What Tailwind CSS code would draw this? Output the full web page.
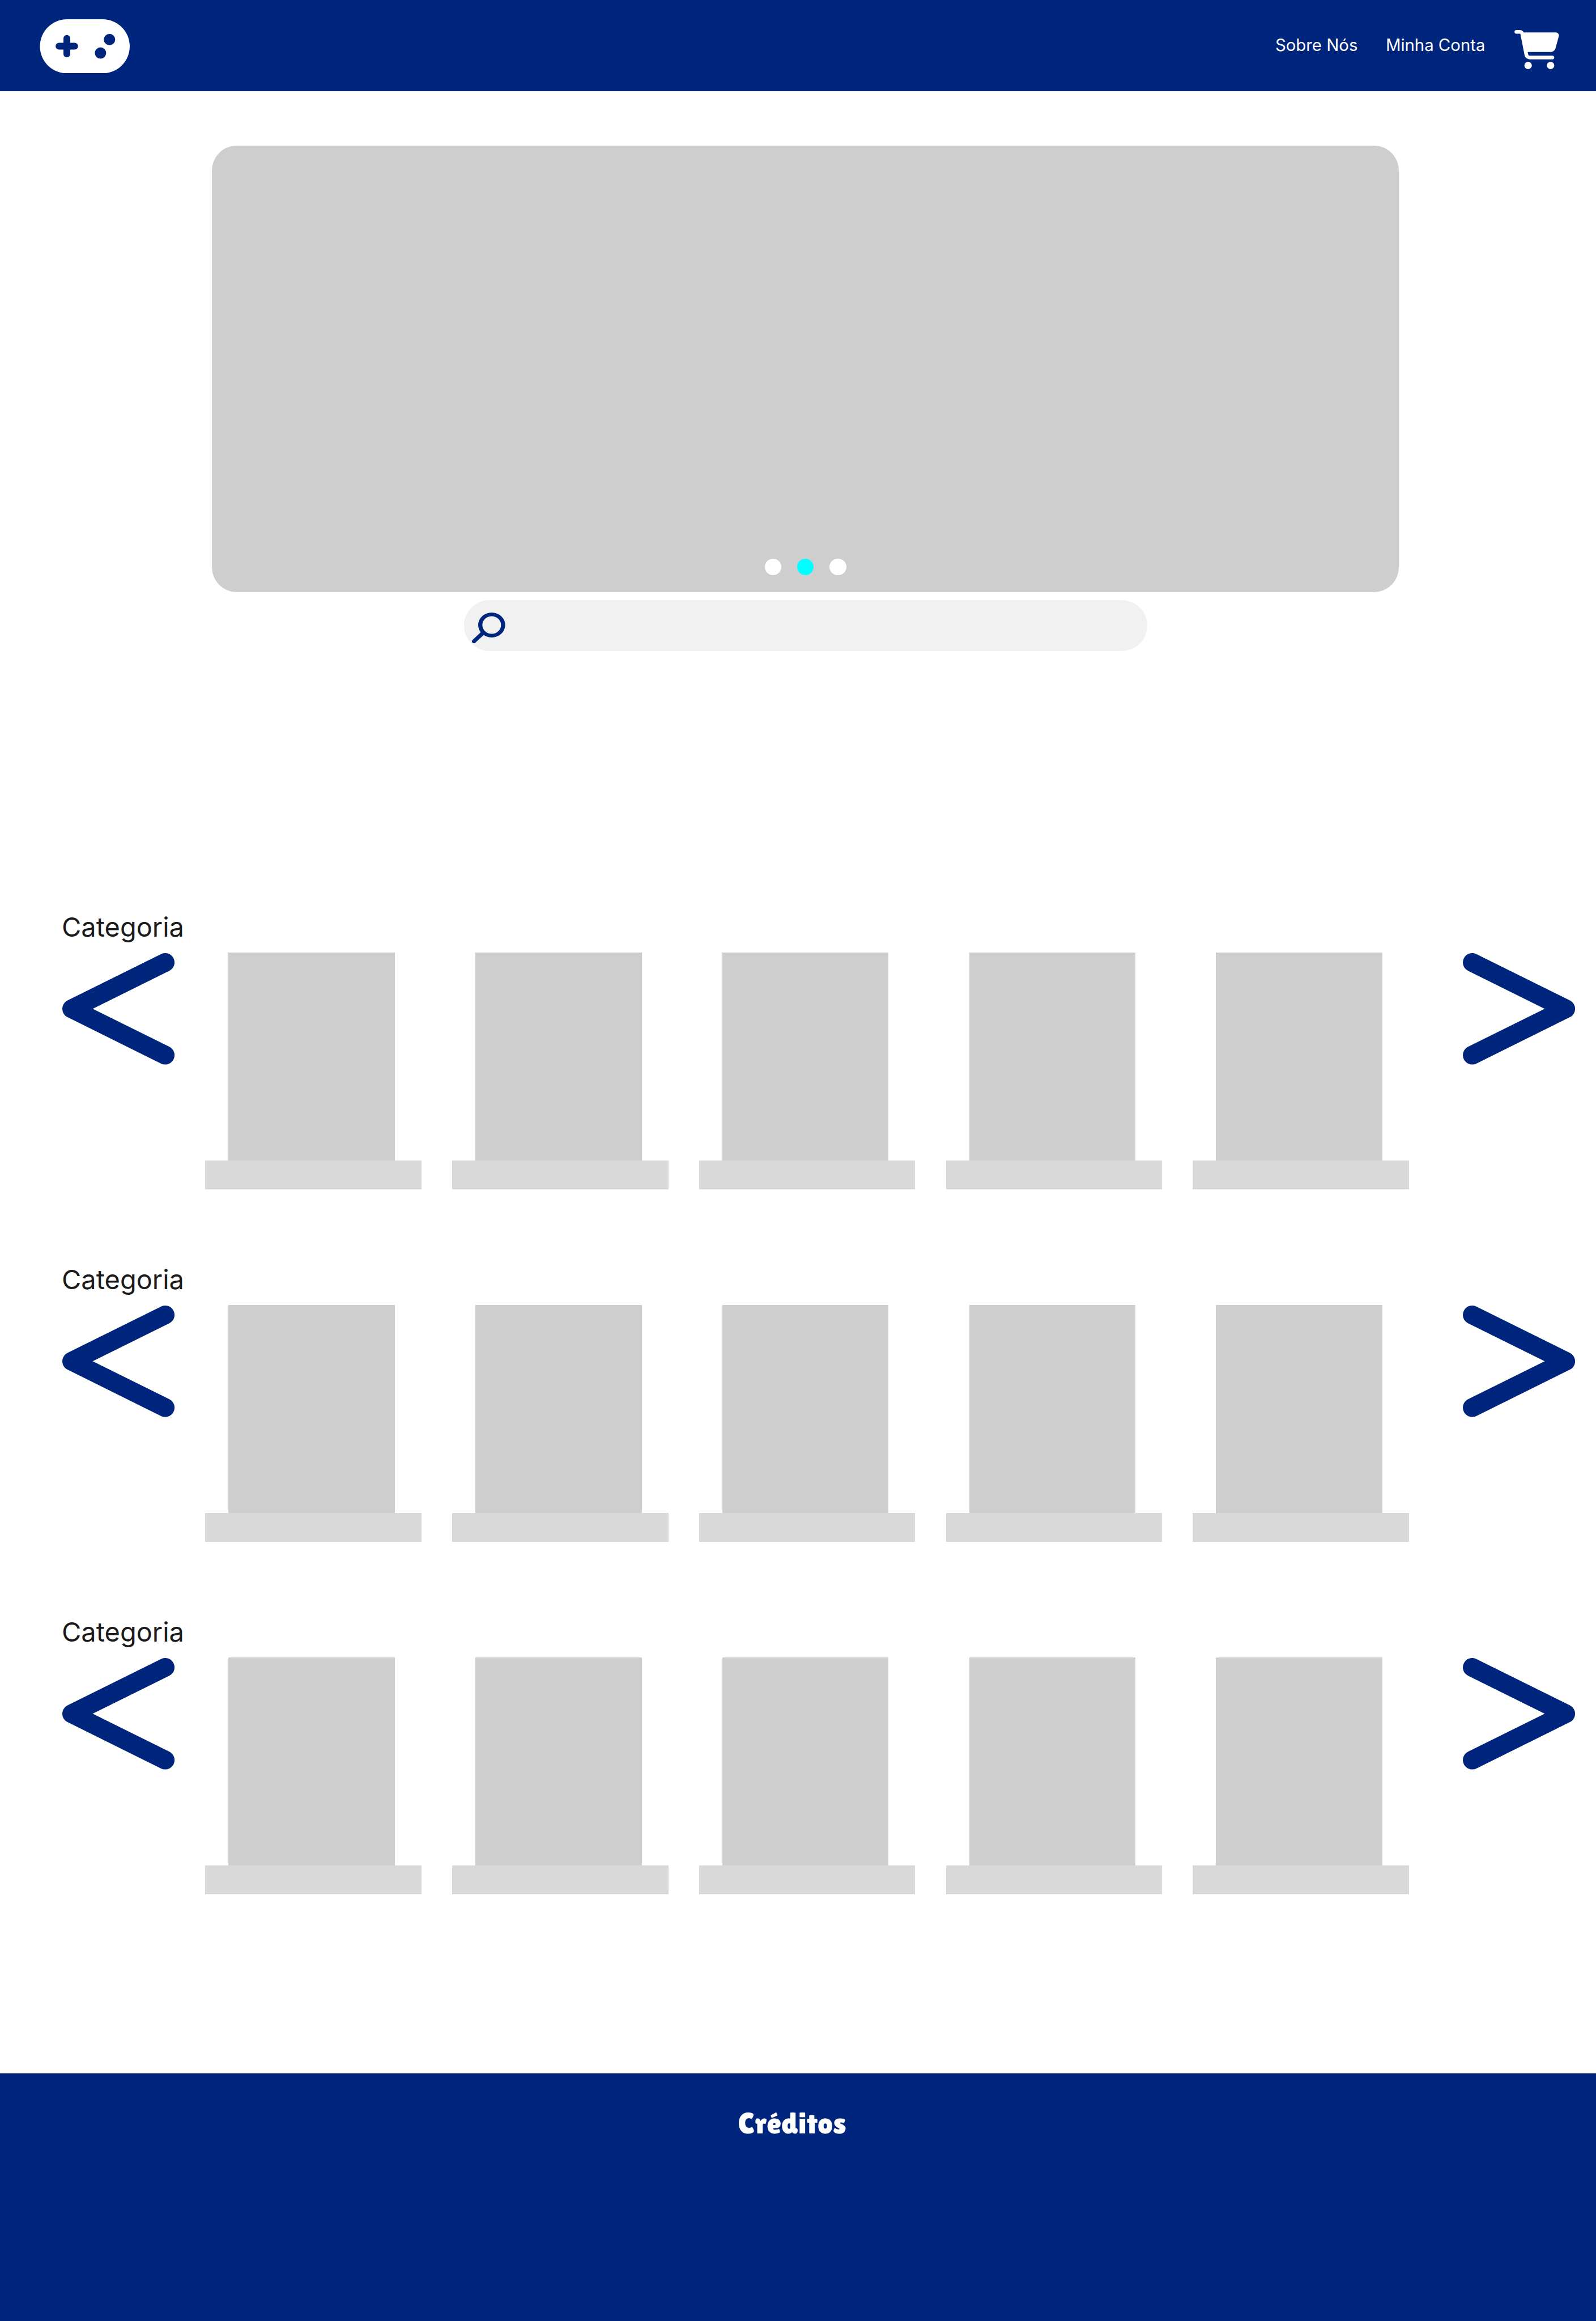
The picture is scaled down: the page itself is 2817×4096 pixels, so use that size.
<!DOCTYPE html>
<html lang="pt-BR">
<head>
<meta charset="utf-8">
<title>Loja de Jogos</title>
<script src="https://cdn.jsdelivr.net/npm/@tailwindcss/browser@4"></script>
</head>
<body class="bg-white">
<div class="flex h-[4096px] w-[2817px] flex-col overflow-hidden font-['Inter',sans-serif]">
  <header class="flex h-[161.4px] shrink-0 items-start justify-between bg-[#00257d] pr-[64.6px] pl-[70.4px]">
    <a href="#" aria-label="Início" class="mt-[33.7px]">
      <svg class="block h-[95.4px] w-[159px]" viewBox="-0.6 0 216.6 130">
        <rect width="216" height="130" rx="65" fill="#fff"/>
        <g fill="#00257d">
          <rect x="37.7" y="56.7" width="54" height="16.2" rx="8.1"/>
          <rect x="56.6" y="37.8" width="16.2" height="54" rx="8.1"/>
          <circle cx="167.4" cy="48.7" r="13.6"/>
          <circle cx="145.7" cy="81.2" r="13.6"/>
        </g>
      </svg>
    </a>
    <nav class="flex items-start text-[29.34px] leading-[36px] text-white [font-variation-settings:'opsz'_14]">
      <a href="#" class="mt-[62px] mr-[49.5px]">Sobre Nós</a>
      <a href="#" class="mt-[62px] mr-[51.8px]">Minha Conta</a>
      <a href="#" aria-label="Carrinho" class="mt-[52.8px]">
        <svg class="block h-[69px] w-[79.2px]" viewBox="0 0 576 512" preserveAspectRatio="none" fill="#fff"><path d="M0 24C0 10.7 10.7 0 24 0H69.5c22 0 41.5 12.8 50.6 32h411c26.3 0 45.5 25 38.6 50.4l-41 152.3c-8.5 31.4-37 53.3-69.5 53.3H170.7l5.4 28.5c2.2 11.3 12.1 19.5 23.6 19.5H488c13.3 0 24 10.7 24 24s-10.7 24-24 24H199.7c-34.6 0-64.3-24.6-70.7-58.5L77.4 54.5c-.7-3.8-4-6.5-7.9-6.5H24C10.7 48 0 37.3 0 24zM128 464a48 48 0 1 1 96 0 48 48 0 1 1 -96 0zm336-48a48 48 0 1 1 0 96 48 48 0 1 1 0-96z"/></svg>
      </a>
    </nav>
  </header>

  <main class="flex shrink-0 flex-col">
    <section class="mt-[95.4px] ml-[374.1px] flex h-[787.8px] w-[2095.2px] items-end justify-center gap-[27.9px] rounded-[44px] bg-[#cecece] pb-[29.3px]">
      <span class="size-[29.3px] rounded-full bg-white"></span>
      <span class="size-[29.3px] rounded-full bg-[#00ffff]"></span>
      <span class="size-[29.3px] rounded-full bg-white"></span>
    </section>
    <div class="mt-[14.6px] ml-[818.7px] flex h-[89.5px] w-[1206px] items-start rounded-full bg-[#f1f1f1] pt-[22px] pl-[14.7px]">
      <svg class="block h-[54.3px] w-[58.7px]" viewBox="0 0 80 74" fill="none" stroke="#00257d">
        <path d="M4.9 69.2L27 48.5" stroke-width="9.6" stroke-linecap="round"/>
        <path fill="#00257d" stroke="none" fill-rule="evenodd" d="M15 30a32.5 30 0 1 0 65 0a32.5 30 0 1 0-65 0zM25 30a22.5 21.1 0 1 1 45 0a22.5 21.1 0 1 1-45 0z"/>
      </svg>
    </div>

    <div id="rows" class="mt-[459.1px] flex flex-col gap-[130.5px]"></div>
  </main>

  <footer class="mt-[315.5px] flex flex-1 items-start bg-[#00257d] pt-[58.3px] pl-[1302.5px]">
    <h2 class="font-['Lilita_One','Open_Sans',sans-serif] text-[53px] leading-[60px] font-normal text-white">Créditos</h2>
  </footer>
</div>

<template id="row">
  <section>
    <h2 class="ml-[109px] h-[57px] text-[46.95px] leading-[57px] text-[#1b1b1b] [font-variation-settings:'opsz'_14]">Categoria</h2>
    <div class="mt-[16.4px] ml-[110px] flex h-[418.1px] items-start">
      <button aria-label="Anterior" class="mt-[1.2px] mr-[54.3px] shrink-0">
        <svg class="block h-[196.6px] w-[198.1px]" viewBox="0 0 270 268" fill="none" stroke="#00257d" stroke-width="45" stroke-linecap="round" stroke-linejoin="round"><path d="M247.5 22.5L22.5 134L247.5 245.5"/></svg>
      </button>
      <div data-cards class="flex gap-[54.3px]"></div>
      <button aria-label="Próximo" class="mt-[1.2px] ml-[95.3px] shrink-0">
        <svg class="block h-[196.6px] w-[198.1px]" viewBox="0 0 270 268" fill="none" stroke="#00257d" stroke-width="45" stroke-linecap="round" stroke-linejoin="round"><path d="M22.5 22.5L247.5 134L22.5 245.5"/></svg>
      </button>
    </div>
  </section>
</template>
<template id="card">
  <article class="flex w-[381.45px] shrink-0 flex-col">
    <div class="ml-[41.1px] h-[366.8px] w-[293.4px] bg-[#cecece]"></div>
    <div class="h-[51.3px] bg-[#d9d9d9]"></div>
  </article>
</template>
<script>
  const rows = document.getElementById('rows');
  for (let r = 0; r < 3; r++) {
    const row = document.getElementById('row').content.cloneNode(true);
    const cards = row.querySelector('[data-cards]');
    for (let c = 0; c < 5; c++) cards.append(document.getElementById('card').content.cloneNode(true));
    rows.append(row);
  }
</script>
</body>
</html>
